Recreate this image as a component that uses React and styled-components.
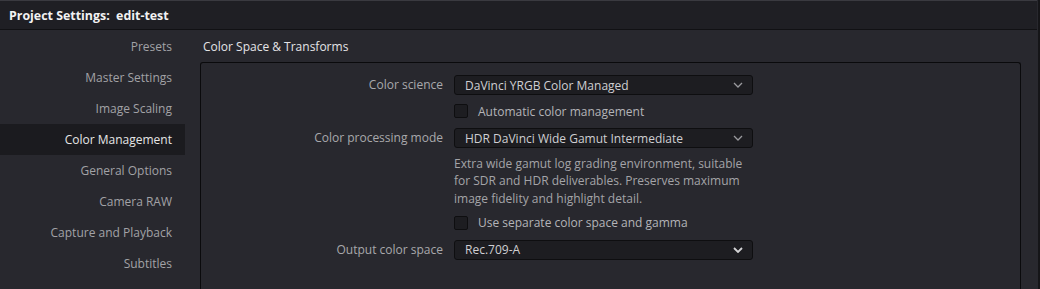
import React from 'react';
import styled, { createGlobalStyle } from 'styled-components';

const GlobalStyle = createGlobalStyle`
  html, body {
    margin: 0;
    padding: 0;
    background: #28282e;
  }
  body {
    font-family: "Open Sans", "Noto Sans", "Liberation Sans", sans-serif;
    -webkit-font-smoothing: antialiased;
  }
`;

const Window = styled.div`
  width: 1040px;
  height: 289px;
  box-sizing: border-box;
  overflow: hidden;
  display: flex;
  flex-direction: column;
  background: #28282e;
  border-right: 2px solid #151518;
  padding-right: 1px;
`;

const TitleBar = styled.div`
  height: 30px;
  flex-shrink: 0;
  box-sizing: border-box;
  border-top: 1px solid #3a3a40;
  border-bottom: 1px solid #111114;
  background: #1f1f24;
  display: flex;
  align-items: center;
  padding-left: 9px;
  color: #f2f2f2;
  font-size: 12.4px;
  font-weight: 700;
  white-space: pre;
`;

const Body = styled.div`
  flex: 1;
  display: flex;
  min-height: 0;
  padding-top: 1px;
`;

const Sidebar = styled.nav`
  width: 185px;
  flex-shrink: 0;
  display: flex;
  flex-direction: column;
`;

const NavItem = styled.div`
  height: 31px;
  line-height: 31px;
  text-align: right;
  padding-right: 13px;
  font-size: 12px;
  color: ${props => (props.active ? '#e6e6e6' : '#a2a2a6')};
  background: ${props => (props.active ? '#1b1b1f' : 'transparent')};
`;

const Content = styled.section`
  flex: 1;
  display: flex;
  flex-direction: column;
  padding-left: 15px;
  padding-right: 16px;
  min-width: 0;
`;

const Heading = styled.h2`
  margin: 0;
  height: 31px;
  line-height: 31px;
  padding-left: 3px;
  font-size: 12px;
  font-weight: 400;
  color: #e4e4e6;
`;

const Panel = styled.div`
  flex: 1;
  border: 1px solid #0a0a0c;
  border-bottom: none;
  border-radius: 3px 3px 0 0;
  padding-top: 12px;
  display: grid;
  grid-template-columns: 242px 299px;
  column-gap: 11px;
  align-content: start;
`;

const Label = styled.div`
  text-align: right;
  font-size: 12px;
  color: #a8a8ac;
  line-height: 20px;
  margin-top: ${props => props.mt || 0}px;
`;

const Cell = styled.div`
  margin-top: ${props => props.mt || 0}px;
`;

const Select = styled.div`
  height: 20px;
  box-sizing: border-box;
  border: 1px solid #0e0e10;
  border-radius: 3px;
  background: #1d1d21;
  display: flex;
  align-items: center;
  justify-content: space-between;
  padding: 0 9px 0 10px;
  font-size: 12px;
  color: #cfcfd2;
`;

const Chevron = styled.svg`
  width: 10px;
  height: 6px;
  stroke: ${props => (props.strong ? '#d4d4d6' : '#9a9a9e')};
  stroke-width: ${props => (props.strong ? 1.8 : 1.3)};
  fill: none;
`;

const CheckRow = styled.label`
  display: flex;
  align-items: center;
  gap: 10px;
  height: 14px;
  font-size: 12px;
  color: #b4b4b8;
`;

const Box = styled.span`
  width: 14px;
  height: 14px;
  box-sizing: border-box;
  border: 1px solid #0e0e10;
  border-radius: 2px;
  background: #1d1d21;
  flex-shrink: 0;
`;

const Description = styled.p`
  margin: 0;
  font-size: 12px;
  line-height: 17.3px;
  color: #a4a4a8;
  white-space: nowrap;
`;

const navItems = [
  'Presets',
  'Master Settings',
  'Image Scaling',
  'Color Management',
  'General Options',
  'Camera RAW',
  'Capture and Playback',
  'Subtitles',
];

const Dropdown = ({ value, strong }) => (
  <Select>
    <span>{value}</span>
    <Chevron strong={strong} viewBox="0 0 10 6">
      <polyline points="1,1 5,5 9,1" />
    </Chevron>
  </Select>
);

const Checkbox = ({ children }) => (
  <CheckRow>
    <Box />
    {children}
  </CheckRow>
);

const App = () => {
  return (
    <>
      <GlobalStyle />
      <Window>
        <TitleBar>Project Settings:  edit-test</TitleBar>
        <Body>
          <Sidebar>
            {navItems.map(item => (
              <NavItem key={item} active={item === 'Color Management'}>
                {item}
              </NavItem>
            ))}
          </Sidebar>
          <Content>
            <Heading>Color Space &amp; Transforms</Heading>
            <Panel>
              <Label>Color science</Label>
              <Cell>
                <Dropdown value="DaVinci YRGB Color Managed" />
              </Cell>

              <div />
              <Cell mt={9}>
                <Checkbox>Automatic color management</Checkbox>
              </Cell>

              <Label mt={10}>Color processing mode</Label>
              <Cell mt={10}>
                <Dropdown value="HDR DaVinci Wide Gamut Intermediate" />
              </Cell>

              <div />
              <Cell mt={7}>
                <Description>
                  Extra wide gamut log grading environment, suitable
                  <br />
                  for SDR and HDR deliverables. Preserves maximum
                  <br />
                  image fidelity and highlight detail.
                </Description>
              </Cell>

              <div />
              <Cell mt={9}>
                <Checkbox>Use separate color space and gamma</Checkbox>
              </Cell>

              <Label mt={10}>Output color space</Label>
              <Cell mt={10}>
                <Dropdown value="Rec.709-A" strong />
              </Cell>
            </Panel>
          </Content>
        </Body>
      </Window>
    </>
  );
};

export default App;
